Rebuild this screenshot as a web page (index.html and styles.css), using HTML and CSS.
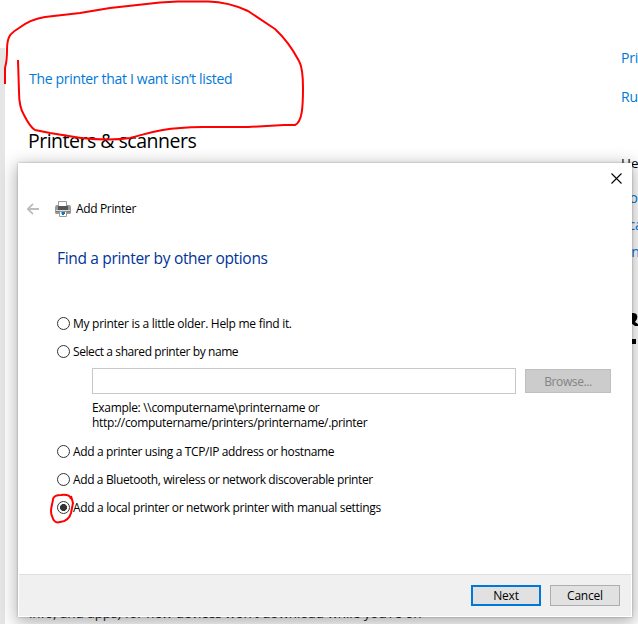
FILE: index.html
```html
<!DOCTYPE html>
<html lang="en">
<head>
<meta charset="utf-8">
<title>Add Printer</title>
<link rel="stylesheet" href="styles.css">
</head>
<body>
<div class="settings">
  <div class="rail"></div>
  <main class="content">
    <a class="link missing">The printer that I want isn’t listed</a>
    <h1>Printers &amp; scanners</h1>
    <p class="note">info, and apps) for new devices won’t download while you’re on</p>
  </main>
  <aside class="related">
    <a class="link">Pri</a>
    <a class="link second">Ru</a>
    <b class="help">He</b>
    <a class="link first-help">Co</a>
    <a class="link">Sca</a>
    <a class="link">Fin</a>
    <svg class="person" width="17" height="40" viewBox="0 0 17 40"><path d="M10 2h2c4 0 5 3 4 6l-2 3 3 2v2h-3l-4-3z"/><path d="M9 28h6v5H9z"/></svg>
  </aside>
</div>

<section class="dialog">
  <div class="body">
    <svg class="close" width="11" height="11" viewBox="0 0 11 11"><path d="M.5.5l10 10M10.500.5l-10 10"/></svg>
    <header>
      <svg class="back" width="12" height="12" viewBox="0 0 12 12"><path d="M12 6H1M6 .8L.8 6 6 11.200"/></svg>
      <svg class="printer" width="16" height="16" viewBox="0 0 16 16">
        <path d="M3.500.5h8v6h-8z" fill="#fff" stroke="#999"/>
        <path d="M1 4h2v1h9V4h3l1 2v6l-1 1H1l-1-1V6z" fill="#999"/>
        <path d="M3 5h10v4H3z" fill="#555"/>
        <path d="M1 9h14v1H1z" fill="#ddd"/>
        <path d="M1 10h14v1H1z" fill="#777"/>
        <path d="M4.500 10.500h7v5h-7z" fill="#fff" stroke="#999"/>
        <path d="M6 11h1v2H6z" fill="#79bce8"/><path d="M7 11h2v3H7z" fill="#0879c0"/><path d="M9 11h1v2H9z" fill="#267764"/>
      </svg>
      <span class="caption">Add Printer</span>
    </header>
    <h2>Find a printer by other options</h2>
    <div class="options">
      <label class="option"><i class="radio"></i><span class="t1">My printer is a little older. Help me find it.</span></label>
      <label class="option"><i class="radio"></i><span class="t2">Select a shared printer by name</span></label>
      <div class="share">
        <div class="field"></div>
        <div class="button browse">Browse...</div>
      </div>
      <p class="example"><span class="e1">Example: \\computername\printername or</span><br><span class="e2">http://computername/printers/printername/.printer</span></p>
      <label class="option"><i class="radio"></i><span class="t3">Add a printer using a TCP/IP address or hostname</span></label>
      <label class="option"><i class="radio"></i><span class="t4">Add a Bluetooth, wireless or network discoverable printer</span></label>
      <label class="option"><i class="radio checked"></i><span class="t5">Add a local printer or network printer with manual settings</span></label>
    </div>
  </div>
  <footer>
    <div class="button next">Next</div>
    <div class="button cancel">Cancel</div>
  </footer>
</section>

<svg class="marks" width="638" height="624" viewBox="0 0 638 624">
  <path d="M5 84V68Q7 61 7 50C7 34 12 33 19 28Q31 19 45 17L80 13L110 8L160 2.500L178 1.500H208Q229 2 248 11L275 29Q289 42 299 61Q303 68 303 88C303 108 302 122 295 125L284 125L248 127H203C154 128 148 134 130 138Q110 141 81 138L50 133L35 130Q30 127 24 115Q19 107 19 92L18 60"/>
  <path d="M71 499Q70 494 61 495Q54 495 53 499C53 504 49 510 52 516Q54 524 60 522Q69 521 71 513L73 503L71 496"/>
</svg>
</body>
</html>
```
FILE: styles.css
```css
* { box-sizing: border-box; }
body {
  margin: 0;
  width: 638px;
  height: 624px;
  overflow: hidden;
  position: relative;
  background: #fff;
  color: #000;
  font-family: "Open Sans", "Noto Sans", sans-serif;
  font-size: 12px;
}
h1, h2, p { margin: 0; font-weight: 400; }

.settings { display: flex; height: 624px; }
.rail { width: 5px; margin-top: 48px; background: #e6e6e6; }
.content {
  width: 616px;
  padding: 69px 0 0 23px;
  display: flex;
  flex-direction: column;
  align-items: flex-start;
  white-space: nowrap;
}
.link { color: #0078d7; font-size: 14px; line-height: 20px; letter-spacing: -.2px; }
.missing { padding-left: 1px; letter-spacing: -.32px; }
h1 { margin-top: 37px; font-size: 19.500px; line-height: 30px; letter-spacing: -.5px; }
.note { margin-top: 447px; padding-left: 1px; color: #222; font-size: 13.500px; line-height: 20px; letter-spacing: -.07px; }
.related {
  width: 17px;
  padding-top: 48px;
  display: flex;
  flex-direction: column;
  gap: 7px;
  overflow: hidden;
}
.second { margin-top: 12px; }
.help { margin-top: 39px; font-size: 13.500px; line-height: 20px; font-weight: 400; }
.first-help { margin-top: 8px; }
.person { margin-top: 42px; flex: none; }

.dialog {
  position: absolute;
  left: 18px;
  top: 163px;
  width: 614px;
  height: 454px;
  display: flex;
  flex-direction: column;
  background: #fff;
  border: 1px solid #fff;
  box-shadow: 0 0 2px rgba(0,0,0,.3), 0 4px 16px 2px rgba(0,0,0,.3);
}
.body { flex: 1; padding: 9px 20px 0 8px; display: flex; flex-direction: column; }
.close { align-self: flex-end; margin-right: -10.500px; fill: none; stroke: #000; stroke-width: 1.100; }
header { display: flex; align-items: center; height: 20px; margin-top: 15px; }
.back { fill: none; stroke: #bdbdbd; stroke-width: 1.800; }
.printer { margin-left: 16px; }
.caption { margin-left: 5px; line-height: 20px; letter-spacing: -.35px; }
h2 { margin: 27px 0 0 30px; color: #003399; font-size: 15.500px; line-height: 24px; letter-spacing: -.32px; white-space: nowrap; }
.options { margin: 43px 0 0 30px; white-space: nowrap; }
.option { display: flex; align-items: center; height: 20px; margin-bottom: 8px; }
.t1 { letter-spacing: -.28px; }
.t2 { letter-spacing: -.41px; }
.t3 { letter-spacing: -.36px; }
.t4 { letter-spacing: -.38px; }
.t5 { letter-spacing: -.34px; }
.e1 { letter-spacing: -.32px; }
.e2 { letter-spacing: -.33px; }
.radio { width: 13px; height: 13px; margin-right: 3px; border: 1px solid #333; border-radius: 50%; background: #fff; }
.checked { background: radial-gradient(circle, #333 3.200px, #fff 3.800px); }
.share { display: flex; align-items: center; gap: 9px; margin: -1px 0 0 35px; }
.field { width: 424px; height: 26px; border: 1px solid #c8c8c8; }
.button { display: flex; align-items: center; justify-content: center; background: #e1e1e1; border: 1px solid #adadad; letter-spacing: -.2px; }
.browse { width: 86px; height: 24px; background: #ccc; border-color: #bfbfbf; color: #838383; letter-spacing: -.4px; }
.example { margin: 6px 0 11px 35px; line-height: 15px; }
footer {
  height: 42px;
  padding: 10px 11px;
  display: flex;
  justify-content: flex-end;
  gap: 9px;
  border-top: 1px solid #dfdfdf;
  background: #f0f0f0;
}
.next, .cancel { width: 70px; height: 21px; }
.next { border: 2px solid #0078d7; }
.marks { position: absolute; left: 0; top: 0; fill: none; stroke: #fe0000; stroke-width: 2; stroke-linejoin: round; }
```
